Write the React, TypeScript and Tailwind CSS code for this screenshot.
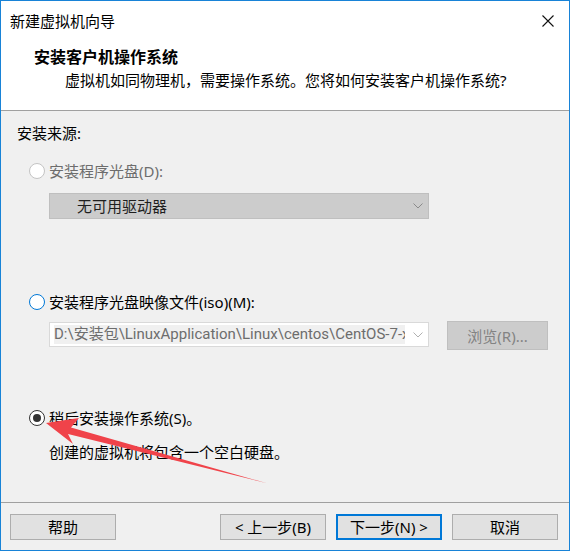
import React from "react";

const font = "font-['Noto_Sans','Noto_Sans_CJK_SC',sans-serif]";

function Radio({ state }: { state: "disabled" | "focus" | "checked" }) {
  if (state === "checked") {
    return (
      <span className="flex h-4 w-4 shrink-0 items-center justify-center rounded-full border border-[#333333] bg-white">
        <span className="h-2 w-2 rounded-full bg-[#333333]" />
      </span>
    );
  }
  return (
    <span
      className={
        state === "focus"
          ? "h-4 w-4 shrink-0 rounded-full border border-[#0078d7] bg-white"
          : "h-4 w-4 shrink-0 rounded-full border border-[#c4c4c4] bg-white"
      }
    />
  );
}

function Chevron({ color }: { color: string }) {
  return (
    <svg width="10" height="6" viewBox="0 0 10 6" fill="none">
      <path d="M0.5 0.5 L5 5 L9.5 0.5" stroke={color} strokeWidth="1" />
    </svg>
  );
}

function Btn({ label, primary }: { label: string; primary?: boolean }) {
  return (
    <div
      className={
        primary
          ? "flex h-[26px] w-[106px] items-center justify-center border-2 border-[#0078d7] bg-[#e1e1e1] text-[15px] text-black"
          : "flex h-[26px] w-[106px] items-center justify-center border border-[#adadad] bg-[#e1e1e1] text-[15px] text-black"
      }
    >
      {label}
    </div>
  );
}

export default function App() {
  return (
    <div
      className={`relative flex h-[551px] w-[570px] flex-col overflow-hidden border border-[#1883d7] bg-[#f0f0f0] leading-[20px] ${font}`}
    >
      {/* Header */}
      <div className="flex h-[109px] flex-col bg-white">
        <div className="flex h-[38px] items-center justify-between pl-[9px] pr-[15px] pt-[1px]">
          <span className="text-[15px] text-black">新建虚拟机向导</span>
          <svg width="12" height="12" viewBox="0 0 12 12">
            <path d="M0.5 0.5 L11.5 11.5 M11.5 0.5 L0.5 11.5" stroke="#111" strokeWidth="1.1" />
          </svg>
        </div>
        <div className="mt-[8px] pl-[33px] text-[16px] font-bold text-black">安装客户机操作系统</div>
        <div className="mt-[3px] pl-[64px] text-[15px] text-black">
          虚拟机如同物理机，需要操作系统。您将如何安装客户机操作系统?
        </div>
      </div>
      <div className="h-px bg-[#a0a0a0]" />

      {/* Body */}
      <div className="flex flex-1 flex-col pl-[28px] pt-[12px]">
        <div className="-ml-[12px] text-[15px] text-black">安装来源:</div>

        <div className="mt-[18px] flex h-5 items-center gap-[4px]">
          <Radio state="disabled" />
          <span className="text-[15px] text-[#6d6d6d]">安装程序光盘(D):</span>
        </div>
        <div className="ml-[20px] mt-[12px] flex h-[26px] w-[380px] items-center justify-between border border-[#bfbfbf] bg-[#cccccc] pl-[27px] pr-[5px]">
          <span className="text-[15px] text-[#1e1e1e]">无可用驱动器</span>
          <Chevron color="#8a8a8a" />
        </div>

        <div className="mt-[73px] flex h-5 items-center gap-[4px]">
          <Radio state="focus" />
          <span className="text-[15px] text-black">安装程序光盘映像文件(iso)(M):</span>
        </div>
        <div className="ml-[20px] mt-[9px] flex items-start gap-[18px]">
          <div className="mt-[1px] flex h-[25px] w-[380px] items-center border border-[#d9d9d9] bg-white pl-[4px] pr-[5px]">
            <div className="h-[19px] w-[351px] overflow-hidden whitespace-nowrap bg-[#f0f0f0] font-['Roboto','Noto_Sans_CJK_SC',sans-serif] text-[15px] leading-[19px] text-[#6d6d6d]">
              D:\安装包\LinuxApplication\Linux\centos\CentOS-7-x86_64-DVD-1810.iso
            </div>
            <div className="flex flex-1 justify-end">
              <Chevron color="#b0b0b0" />
            </div>
          </div>
          <div className="flex h-[29px] w-[101px] items-center justify-center border border-[#bfbfbf] bg-[#cccccc] text-[15px] text-[#838383]">
            浏览(R)...
          </div>
        </div>

        <div className="mt-[58px] flex h-5 items-center gap-[4px]">
          <Radio state="checked" />
          <span className="text-[15px] text-black">稍后安装操作系统(S)。</span>
        </div>
        <div className="ml-[20px] mt-[14px] text-[15px] text-black">创建的虚拟机将包含一个空白硬盘。</div>
      </div>

      <div className="h-px bg-[#a0a0a0]" />

      {/* Footer */}
      <div className="flex h-[47px] items-start pl-[9px] pr-[11px] pt-[11px]">
        <Btn label="帮助" />
        <div className="flex-1" />
        <div className="flex gap-[10px]">
          <Btn label="< 上一步(B)" />
          <Btn label="下一步(N) >" primary />
          <Btn label="取消" />
        </div>
      </div>

      {/* Annotation arrow */}
      <svg
        className="pointer-events-none absolute left-[-1px] top-[-1px]"
        width="570"
        height="551"
        viewBox="0 0 570 551"
      >
        <polygon
          points="46,423 79,418 71,427.5 266,483 68,434 73,444"
          fill="#f0434a"
        />
      </svg>
    </div>
  );
}
